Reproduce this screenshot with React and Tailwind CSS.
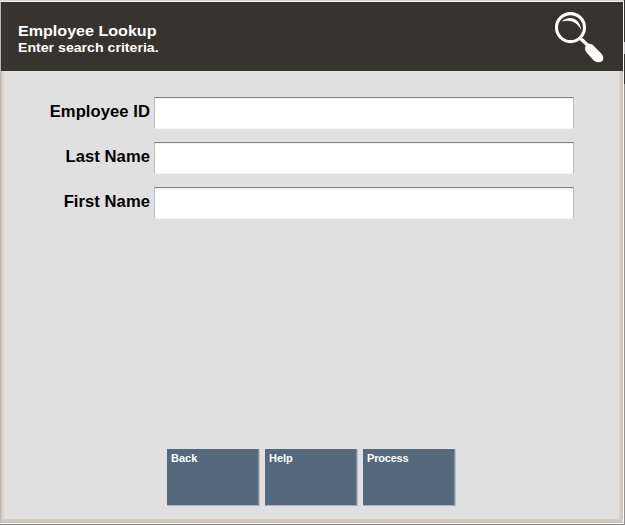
import { useState } from "react";

const FIELDS = [
  { id: "employee-id", label: "Employee ID" },
  { id: "last-name", label: "Last Name" },
  { id: "first-name", label: "First Name" },
];

const ACTIONS = [
  { id: "back", label: "Back" },
  { id: "help", label: "Help" },
  { id: "process", label: "Process", className: "tracking-[-0.2px]" },
];

/** Magnifying glass shown in the header */
function SearchGlass() {
  return (
    <svg width="50" height="52" viewBox="0 0 50 52" fill="none">
      <circle cx="16.5" cy="15.6" r="14" stroke="#fff" strokeWidth="3.1" />
      <path
        d="M7.6 9.6C14 2.8 26.2 5.2 27.2 18C23 9.6 15.5 7.2 7.6 9.6Z"
        fill="#fff"
      />
      <path d="M26 26L34 33.5" stroke="#fff" strokeWidth="3.4" />
      <path
        d="M31.2 35C31.6 32 35.5 30.6 38.4 32.6L47 41.2C51.4 46.2 49 50.4 44.6 50.3C42 50.2 40 48.9 38.6 47.2L32.4 40.2C31 38.4 31 36.6 31.2 35Z"
        fill="#fff"
      />
    </svg>
  );
}

/** Label and text box on one row */
function Field({ id, label, value, onChange }) {
  return (
    <div className="flex h-8">
      <label
        htmlFor={id}
        className="w-[146px] pt-[3px] mr-1 text-right text-[16.6px] leading-6 tracking-[0.06px] font-bold text-black"
      >
        {label}
      </label>
      <input
        id={id}
        type="text"
        value={value}
        onChange={(e) => onChange(id, e.target.value)}
        className="w-[420px] h-8 px-1 bg-white border border-t-[#858585] border-x-[#bdbdbd] border-b-[#f4f4f4] shadow-[inset_0_1px_0_#ededed] outline-none"
      />
    </div>
  );
}

function App() {
  const [values, setValues] = useState({});

  const handleChange = (id, value) => {
    setValues({ ...values, [id]: value });
  };

  return (
    <div className="w-[625px] h-[525px] flex overflow-hidden bg-white font-['Liberation_Sans',Arial,sans-serif]">
      <div className="w-[624px] flex flex-col border-b border-[#858585]">
        <div className="h-0.5 shrink-0 border-t border-[#d5d8d8] bg-[#edf0f0]" />
        <div className="w-[623px] h-[521px] flex flex-col border-l border-[#bdb5af]">
          <header className="h-[69px] shrink-0 flex justify-between bg-[#37332e] text-white pl-[17px] pr-[19px]">
            <div className="pt-5 font-bold whitespace-nowrap">
              <h1 className="text-[15px] leading-[18px] origin-left scale-x-[1.072]">
                Employee Lookup
              </h1>
              <p className="text-[13px] leading-4 origin-left scale-x-[1.087]">
                Enter search criteria.
              </p>
            </div>
            <div className="pt-[10px]">
              <SearchGlass />
            </div>
          </header>

          <main className="flex-1 flex flex-col bg-linear-to-t from-[#c9beb7] to-[#dad0c9] to-[4px]">
            <div className="flex-1 flex mb-1">
              <div className="w-[3px] bg-linear-to-r from-[#d0c5be] to-[#ded8d4]" />
              <div className="flex-1 flex flex-col bg-[#e0e0e0]">
                <div className="flex flex-col gap-[13px] pt-[26px]">
                  {FIELDS.map((field) => (
                    <Field
                      key={field.id}
                      id={field.id}
                      label={field.label}
                      value={values[field.id] || ""}
                      onChange={handleChange}
                    />
                  ))}
                </div>

                <div className="mt-auto mb-[13px] ml-[163px] flex gap-1.5">
                  {ACTIONS.map((action) => (
                    <button
                      key={action.id}
                      type="button"
                      className={`w-[92px] h-[57px] pl-1 pt-px flex items-start bg-[#54697e] border-r border-b border-r-[#858d98] border-b-[#aeb2b8] shadow-[1px_0_0_#bdbdbf] text-white text-[11px] font-bold ${
                        action.className || ""
                      }`}
                    >
                      {action.label}
                    </button>
                  ))}
                </div>
              </div>
              <div className="w-1 bg-linear-to-r from-[#ded7d2] to-[#c9beb7]" />
            </div>
          </main>
        </div>
      </div>
      {/* Window edge */}
      <div className="w-px flex flex-col">
        <div className="h-[42px] bg-[#37332e]" />
        <div className="h-3 bg-[#c8c8c8]" />
        <div className="h-[30px] bg-[#37332e]" />
        <div className="flex-1 bg-[#929292]" />
      </div>
    </div>
  );
}

export default App;
